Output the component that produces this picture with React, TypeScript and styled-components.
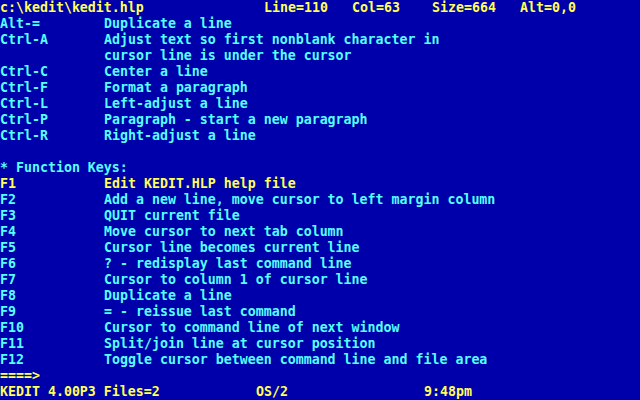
import React from "react";
import styled, { createGlobalStyle } from "styled-components";

const CYAN = "#55ffff";
const YELLOW = "#ffff55";

const Global = createGlobalStyle`
  html, body { margin: 0; padding: 0; background: #0000aa; }
  body { width: 640px; height: 400px; overflow: hidden; }
`;

const Screen = styled.div`
  width: 640px;
  height: 400px;
  background: #0000aa;
  display: flex;
  flex-direction: column;
  font-family: "DejaVu Sans Mono", "Liberation Mono", monospace;
  font-size: 13.28px;
  font-weight: bold;
  overflow: hidden;
`;

const Line = styled.div<{ $color?: string }>`
  height: 16px;
  line-height: 16px;
  color: ${(p) => p.$color || CYAN};
  display: flex;
  white-space: pre;
`;

const Field = styled.span<{ $cols: number }>`
  display: inline-block;
  width: ${(p) => p.$cols * 8}px;
  flex: none;
  overflow: hidden;
`;

const Text = styled.span`
  flex: none;
`;

type Entry = { key: string; desc: string; color?: string };

const topEntries: Entry[] = [
  { key: "Alt-=", desc: "Duplicate a line" },
  { key: "Ctrl-A", desc: "Adjust text so first nonblank character in" },
  { key: "", desc: "cursor line is under the cursor" },
  { key: "Ctrl-C", desc: "Center a line" },
  { key: "Ctrl-F", desc: "Format a paragraph" },
  { key: "Ctrl-L", desc: "Left-adjust a line" },
  { key: "Ctrl-P", desc: "Paragraph - start a new paragraph" },
  { key: "Ctrl-R", desc: "Right-adjust a line" },
];

const fnEntries: Entry[] = [
  { key: "F1", desc: "Edit KEDIT.HLP help file", color: YELLOW },
  { key: "F2", desc: "Add a new line, move cursor to left margin column" },
  { key: "F3", desc: "QUIT current file" },
  { key: "F4", desc: "Move cursor to next tab column" },
  { key: "F5", desc: "Cursor line becomes current line" },
  { key: "F6", desc: "? - redisplay last command line" },
  { key: "F7", desc: "Cursor to column 1 of cursor line" },
  { key: "F8", desc: "Duplicate a line" },
  { key: "F9", desc: "= - reissue last command" },
  { key: "F10", desc: "Cursor to command line of next window" },
  { key: "F11", desc: "Split/join line at cursor position" },
  { key: "F12", desc: "Toggle cursor between command line and file area" },
];

const HelpRow = ({ entry }: { entry: Entry }) => (
  <Line $color={entry.color}>
    <Field $cols={13}>{entry.key}</Field>
    <Text>{entry.desc}</Text>
  </Line>
);

export default function App() {
  return (
    <>
      <Global />
      <Screen>
        <Line $color={YELLOW}>
          <Field $cols={33}>c:\kedit\kedit.hlp</Field>
          <Field $cols={11}>Line=110</Field>
          <Field $cols={10}>Col=63</Field>
          <Field $cols={11}>Size=664</Field>
          <Text>Alt=0,0</Text>
        </Line>
        {topEntries.map((e, i) => (
          <HelpRow key={"t" + i} entry={e} />
        ))}
        <Line />
        <Line>
          <Text>* Function Keys:</Text>
        </Line>
        {fnEntries.map((e, i) => (
          <HelpRow key={"f" + i} entry={e} />
        ))}
        <Line $color={YELLOW}>
          <Text>====&gt;</Text>
        </Line>
        <Line $color={YELLOW}>
          <Field $cols={32}>KEDIT 4.00P3 Files=2</Field>
          <Field $cols={21}>OS/2</Field>
          <Text>9:48pm</Text>
        </Line>
      </Screen>
    </>
  );
}
